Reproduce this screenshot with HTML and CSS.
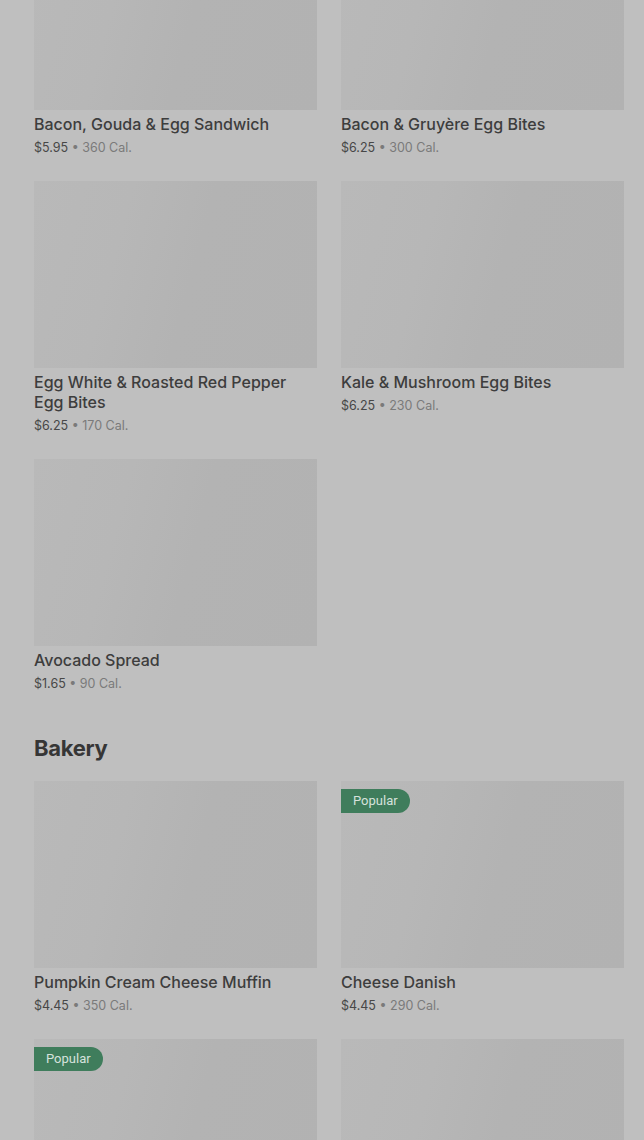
FILE: index.html
```html
<!DOCTYPE html>
<html lang="en">
<head>
    <meta charset="UTF-8">
    <meta name="viewport" content="width=device-width, initial-scale=1.0">
    <title>Menu</title>
    <link rel="stylesheet" href="styles.css">
</head>
<body>
    <main class="menu">
        <section class="category">
            <div class="grid">
                <div class="item">
                    <div class="thumb"></div>
                    <div class="name">Bacon, Gouda &amp; Egg Sandwich</div>
                    <div class="meta"><span class="price">$5.95</span> • 360 Cal.</div>
                </div>
                <div class="item">
                    <div class="thumb"></div>
                    <div class="name">Bacon &amp; Gruyère Egg Bites</div>
                    <div class="meta"><span class="price">$6.25</span> • 300 Cal.</div>
                </div>
                <div class="item">
                    <div class="thumb"></div>
                    <div class="name">Egg White &amp; Roasted Red Pepper Egg Bites</div>
                    <div class="meta"><span class="price">$6.25</span> • 170 Cal.</div>
                </div>
                <div class="item">
                    <div class="thumb"></div>
                    <div class="name">Kale &amp; Mushroom Egg Bites</div>
                    <div class="meta"><span class="price">$6.25</span> • 230 Cal.</div>
                </div>
                <div class="item">
                    <div class="thumb"></div>
                    <div class="name">Avocado Spread</div>
                    <div class="meta"><span class="price">$1.65</span> • 90 Cal.</div>
                </div>
            </div>
        </section>

        <section class="category">
            <h2 class="category-title">Bakery</h2>
            <div class="grid">
                <div class="item">
                    <div class="thumb"></div>
                    <div class="name">Pumpkin Cream Cheese Muffin</div>
                    <div class="meta"><span class="price">$4.45</span> • 350 Cal.</div>
                </div>
                <div class="item">
                    <div class="thumb"><span class="badge">Popular</span></div>
                    <div class="name">Cheese Danish</div>
                    <div class="meta"><span class="price">$4.45</span> • 290 Cal.</div>
                </div>
                <div class="item">
                    <div class="thumb"><span class="badge">Popular</span></div>
                </div>
                <div class="item">
                    <div class="thumb"></div>
                </div>
            </div>
        </section>
    </main>
</body>
</html>
```

FILE: styles.css
```css
body {
    margin: 0;
    background: #bfbfbf;
    font-family: Inter, Roboto, "Liberation Sans", sans-serif;
    color: #3b3b3b;
    overflow: hidden;
}
.menu {
    margin-top: -77px;
    padding: 0 20px 0 34px;
}
.category {
    margin-bottom: 42px;
}
.category-title {
    margin: 0 0 21px 0;
    font-size: 22px;
    line-height: 24px;
    font-weight: 700;
    letter-spacing: -0.3px;
    color: #363636;
}
.grid {
    display: grid;
    grid-template-columns: 1fr 1fr;
    column-gap: 24px;
    row-gap: 23px;
}
.thumb {
    position: relative;
    height: 187px;
    background: linear-gradient(105deg, #b9b9b9 0%, #b7b7b7 30%, #b3b3b3 55%, #b2b2b2 100%);
}
.badge {
    position: absolute;
    top: 8px;
    left: 0;
    padding: 0 12px;
    height: 24px;
    line-height: 24px;
    font-family: Roboto, sans-serif;
    font-size: 13px;
    color: #d6e2dc;
    background: #3f7d5c;
    border-radius: 0 12px 12px 0;
}
.name {
    margin-top: 4px;
    padding-right: 16px;
    font-size: 16px;
    line-height: 20px;
    font-weight: 500;
    color: #3d3d3d;
}
.meta {
    margin-top: 4px;
    font-size: 12.5px;
    line-height: 20px;
    color: #7a7a7a;
}
.price {
    color: #474747;
}
```
